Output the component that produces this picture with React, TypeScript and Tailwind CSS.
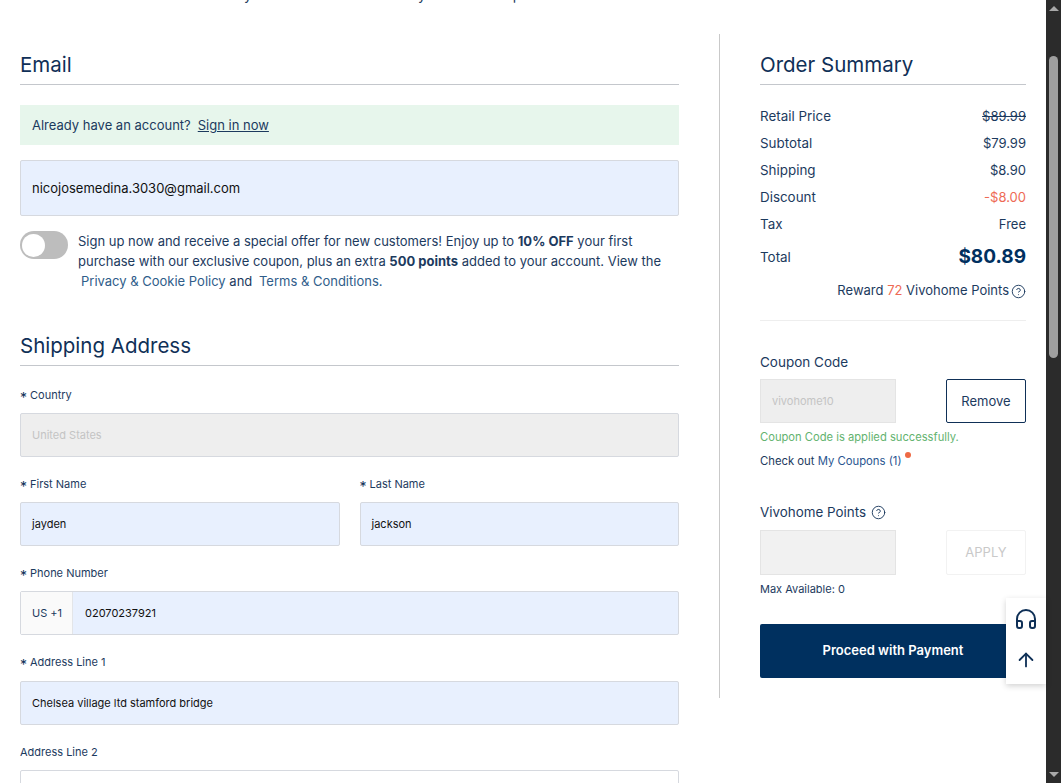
import { ArrowUp, CircleHelp, Headphones } from 'lucide-react'

const font = "font-['Inter','Liberation_Sans',sans-serif]"

function Label({ text, required = true }: { text: string; required?: boolean }) {
  return (
    <div className="flex h-[18px] items-center text-[11px] leading-[18px] text-[#1c3a5e]">
      {required && <span className="mt-[5px] w-[10px] text-[14px] leading-none text-[#0f3057]">*</span>}
      {text}
    </div>
  )
}

function Input({ value, disabled = false }: { value?: string; disabled?: boolean }) {
  return (
    <div
      className={`flex h-[44px] items-center rounded-[2px] border border-[#d6d9df] px-[11px] text-[11px] ${
        disabled ? 'bg-[#eeeeee] text-[#c4c4c4]' : 'bg-[#e8f0fe] text-[#111111]'
      }`}
    >
      {value}
    </div>
  )
}

function SummaryRow({ label, value, valueClass = '' }: { label: string; value: string; valueClass?: string }) {
  return (
    <div className="flex h-[27px] items-center justify-between text-[13px] text-[#1c3a5e]">
      <span className="text-[13.4px]">{label}</span>
      <span className={valueClass}>{value}</span>
    </div>
  )
}

export default function App() {
  return (
    <div className={`${font} flex h-[783px] w-[1061px] overflow-hidden bg-white`}>
      <div className="relative w-[1046px] shrink-0">
        <div className="flex h-[4px] items-start overflow-hidden pl-[244px] text-[14px] text-[#1c3a5e]">
          <span className="-mt-[12px] leading-[14px]">y</span>
          <span className="-mt-[12px] ml-[166px] leading-[14px]">y</span>
          <span className="-mt-[12px] ml-[87px] leading-[14px]">p</span>
        </div>

        <div className="flex pl-[20px] pt-[30px]">
          <main className="w-[659px] shrink-0">
            <h2 className="flex h-[51px] items-center border-b border-[#c4c7cc] pt-[13px] text-[20.5px] font-normal text-[#0f3057]">
              Email
            </h2>

            <div className="mt-[20px] flex h-[40px] items-center bg-[#e7f6ec] px-[12px] pt-[1px] text-[13px] text-[#1c3a5e]">
              Already have an account?
              <a className="ml-[7px] underline">Sign in now</a>
            </div>

            <div className="mt-[15px] flex h-[56px] items-center rounded-[2px] border border-[#d6d9df] bg-[#e8f0fe] px-[11px] pt-[1px] text-[13px] text-[#111111]">
              nicojosemedina.3030@gmail.com
            </div>

            <div className="mt-[15px] flex">
              <div className="flex h-[28px] w-[48px] shrink-0 items-center rounded-full bg-[#bdbdbd] pl-[2px]">
                <div className="h-[23px] w-[23px] rounded-full bg-white" />
              </div>
              <p className="ml-[10px] w-[595px] text-[13px] leading-[20px] text-[#1c3a5e]">
                Sign up now and receive a special offer for new customers! Enjoy up to <b>10% OFF</b> your first purchase
                with our exclusive coupon, plus an extra <b>500 points</b> added to your account. View the{' '}
                <a className="ml-[3px] text-[#2f5d8a]">Privacy &amp; Cookie Policy</a> and{' '}
                <a className="ml-[3px] text-[#2f5d8a]">Terms &amp; Conditions.</a>
              </p>
            </div>

            <h2 className="mt-[35px] flex h-[40px] items-center border-b border-[#c4c7cc] pt-[2px] text-[20.5px] font-normal text-[#0f3057]">
              Shipping Address
            </h2>

            <div className="mt-[20px]">
              <Label text="Country" />
              <div className="mt-[9px]">
                <Input value="United States" disabled />
              </div>
            </div>

            <div className="mt-[18px] grid grid-cols-2 gap-x-[20px]">
              <div>
                <Label text="First Name" />
                <div className="mt-[9px]">
                  <Input value="jayden" />
                </div>
              </div>
              <div>
                <Label text="Last Name" />
                <div className="mt-[9px]">
                  <Input value="jackson" />
                </div>
              </div>
            </div>

            <div className="mt-[18px]">
              <Label text="Phone Number" />
              <div className="mt-[9px] flex h-[44px] rounded-[2px] border border-[#d6d9df] bg-[#e8f0fe] text-[11px]">
                <div className="flex w-[52px] items-center border-r border-[#e3e5e8] bg-[#fafafa] pl-[11px] text-[#1c3a5e]">
                  US +1
                </div>
                <div className="flex items-center pl-[12px] text-[#111111]">02070237921</div>
              </div>
            </div>

            <div className="mt-[18px]">
              <Label text="Address Line 1" />
              <div className="mt-[10px]">
                <Input value="Chelsea village ltd stamford bridge" />
              </div>
            </div>

            <div className="mt-[18px]">
              <Label text="Address Line 2" required={false} />
              <div className="mt-[9px] h-[44px] rounded-[2px] border border-[#d6d9df] bg-white" />
            </div>
          </main>

          <div className="ml-[40px] h-[664px] w-px shrink-0 bg-[#c9c9c9]" />

          <aside className="ml-[40px] w-[266px] shrink-0">
            <h2 className="flex h-[51px] items-center border-b border-[#c4c7cc] pt-[13px] text-[20.5px] font-normal text-[#0f3057]">
              Order Summary
            </h2>

            <div className="mt-[18px]">
              <SummaryRow label="Retail Price" value="$89.99" valueClass="line-through" />
              <SummaryRow label="Subtotal" value="$79.99" />
              <SummaryRow label="Shipping" value="$8.90" />
              <SummaryRow label="Discount" value="-$8.00" valueClass="text-[#ee6a55]" />
              <SummaryRow label="Tax" value="Free" />
            </div>

            <div className="mt-[3px] flex h-[33px] items-center justify-between text-[13.4px] text-[#1c3a5e]">
              <span>Total</span>
              <span className="text-[19px] font-bold text-[#00305f]">$80.89</span>
            </div>

            <div className="mt-[7px] flex h-[20px] items-center justify-end text-[13px] text-[#1c3a5e]">
              Reward&nbsp;<span className="text-[#ee6a55]">72</span>&nbsp;Vivohome Points
              <CircleHelp className="ml-[2px] h-[15px] w-[15px]" strokeWidth={1.5} />
            </div>

            <div className="mt-[19px] border-t border-[#eeeeee]" />

            <div className="mt-[32px] flex h-[18px] items-center text-[13.5px] text-[#1c3a5e]">Coupon Code</div>
            <div className="mt-[8px] flex justify-between">
              <div className="flex h-[44px] w-[136px] items-center border border-[#e4e4e4] bg-[#eeeeee] px-[11px] text-[11px] text-[#c4c4c4]">
                vivohome10
              </div>
              <button className="h-[44px] w-[80px] rounded-[2px] border border-[#0f3057] pt-[1px] text-[13px] text-[#1c3a5e]">
                Remove
              </button>
            </div>
            <div className="mt-[7px] h-[14px] text-[11.2px] leading-[14px] text-[#63b36f]">
              Coupon Code is applied successfully.
            </div>
            <div className="relative mt-[10px] h-[14px] w-fit pr-[2px] text-[11.3px] leading-[14px] text-[#1c3a5e]">
              Check out <a className="text-[#2a5590]">My Coupons (1)</a>
              <span className="absolute -right-[7px] -top-[2px] h-[6px] w-[6px] rounded-full bg-[#ee6a45]" />
            </div>

            <div className="mt-[35px] flex h-[18px] items-center text-[13.4px] text-[#1c3a5e]">
              Vivohome Points
              <CircleHelp className="ml-[5px] h-[15px] w-[15px]" strokeWidth={1.5} />
            </div>
            <div className="mt-[9px] flex justify-between">
              <div className="h-[45px] w-[136px] border border-[#e4e4e4] bg-[#f1f1f1]" />
              <button className="h-[45px] w-[80px] rounded-[2px] border border-[#f2f2f2] text-[13px] text-[#c9c9c9]">
                APPLY
              </button>
            </div>
            <div className="mt-[7px] h-[14px] text-[11px] leading-[14px] text-[#1c3a5e]">Max Available: 0</div>

            <button className="mt-[28px] h-[54px] w-full rounded-[2px] bg-[#00305f] text-[13px] font-semibold text-white">
              Proceed with Payment
            </button>
          </aside>
        </div>

        <div className="absolute right-0 top-[598px] flex h-[86px] w-[40px] flex-col items-center justify-center gap-[18px] bg-white pb-[5px] text-[#0f3057] shadow-[0_2px_6px_rgba(0,0,0,0.18)]">
          <Headphones className="h-[24px] w-[24px]" strokeWidth={2} />
          <ArrowUp className="h-[22px] w-[22px]" strokeWidth={2} />
        </div>
      </div>

      <div className="flex w-[15px] shrink-0 flex-col items-center bg-[#2b2b2b]">
        <div className="mt-[6px] h-0 w-0 border-x-[5px] border-b-[5px] border-x-transparent border-b-[#a8a8a8]" />
        <div className="mt-[45px] h-[302px] w-[9px] rounded-full bg-[#9f9f9f]" />
        <div className="mt-auto mb-[6px] h-0 w-0 border-x-[5px] border-t-[5px] border-x-transparent border-t-[#a8a8a8]" />
      </div>
    </div>
  )
}
